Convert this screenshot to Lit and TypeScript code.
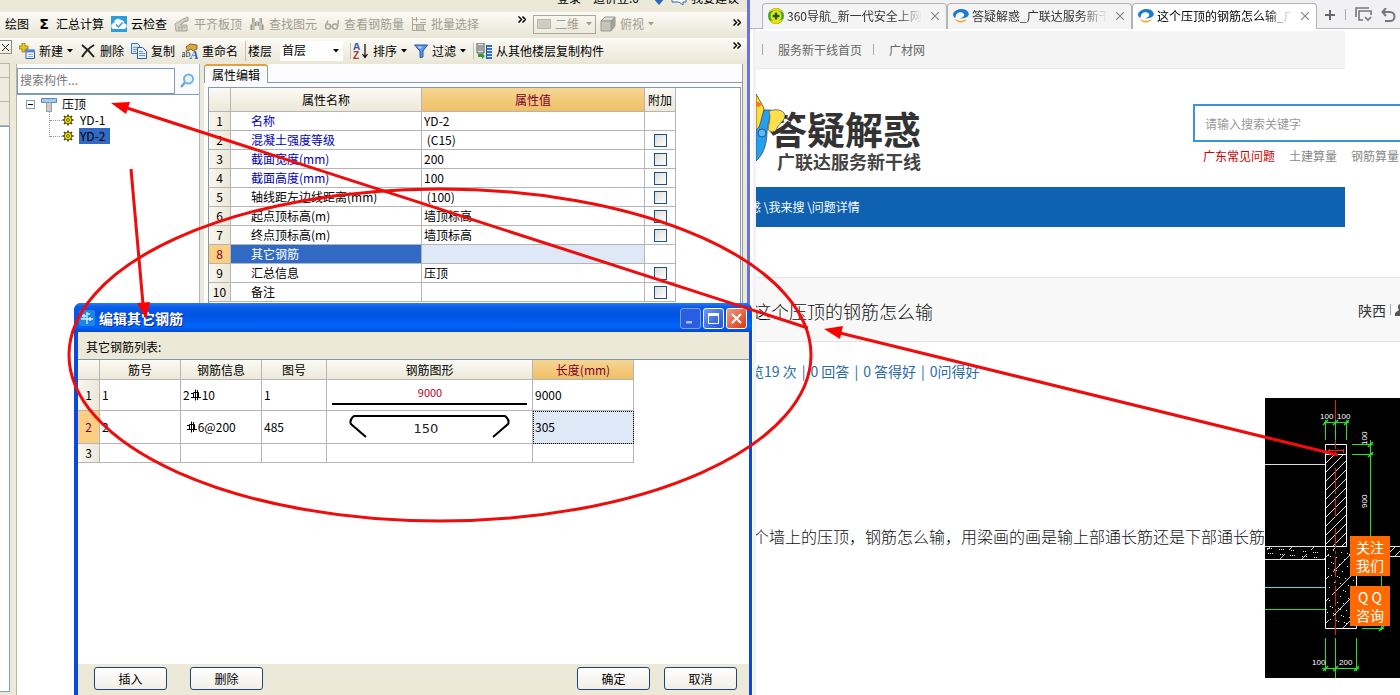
import { LitElement, html, css, svg, nothing } from "lit";
import { customElement } from "lit/decorators.js";
import { classMap } from "lit/directives/class-map.js";

const controls = css`
  * { box-sizing: border-box; }
  button { font: inherit; color: inherit; background: none; border: 0; padding: 0; margin: 0; white-space: nowrap; }
  input, select { font: inherit; color: inherit; margin: 0; border-radius: 0; }
  a { color: inherit; text-decoration: none; }
  svg { display: block; flex: none; }
`;

/* ---------- icons ---------- */
const i16 = (body: unknown) => html`<svg width="16" height="16" viewBox="0 0 16 16" aria-hidden="true">${body}</svg>`;
const caret = html`<svg width="6" height="4" viewBox="0 0 6 4" aria-hidden="true"><path d="M0 0h6L3 3.5z" fill="currentColor"/></svg>`;
const chevrons = html`<svg width="8" height="7" viewBox="0 0 8 7" fill="none" stroke="#000" stroke-width="1.5" aria-hidden="true"><path d="M.5.5l3 3-3 3M4.5.5l3 3-3 3"/></svg>`;

const icons = {
  cloud: i16(svg`<rect width="16" height="16" fill="#2b9fdb"/><path d="M3.500 13a3 3 0 0 1-.4-6A4 4 0 0 1 10 4a3.600 3.600 0 0 1 3.200 3.400 2.800 2.800 0 0 1-.7 5.600z" fill="#fff"/><path d="M5 8.500l2.500 2.500 4-4.500" fill="none" stroke="#2b9fdb" stroke-width="1.500"/>`),
  slab: i16(svg`<path d="M1 8l8-5 5-2v4l-4 1-3 3h6v6H2z" fill="#d4d1c6" stroke="#aaa79c"/><path d="M4 11h8M6 9l6-5M5 15v-4M8 15v-4" stroke="#aaa79c"/>`),
  find: i16(svg`<path d="M3 2h3v4h1V5h2v1h1V2h3v5l2 2v5h-5v-4H6v4H1V9l2-2z" fill="#c2bfb4"/><path d="M3.500 2v5M12.500 2v5M2.500 9v5M13.500 9v5M6.500 6v4M9.500 6v4" stroke="#99968c"/>`),
  glasses: i16(svg`<g fill="none" stroke="#aaa79c" stroke-width="1.500"><circle cx="4" cy="10.500" r="2.500"/><circle cx="11" cy="10.500" r="2.500"/><path d="M2 8.500l2-4M13.500 11l1-7M6.500 10.500h2"/></g>`),
  batch: i16(svg`<path d="M1.500 1v14M1 3.500h6M1 8.500h14M1 14.500h14M5.500 1v5M9 3.500h6M9 6.500h6M5.500 8v6M12.500 8v6" stroke="#aaa79c" fill="none"/><path d="M6 9h6v5H6z" fill="#ccc9be"/>`),
  cube: i16(svg`<path d="M1 5l4-4h10l-4 4z" fill="#e0ddd3" stroke="#9d9a90"/><path d="M11 5l4-4v9l-4 5z" fill="#a5a298" stroke="#9d9a90"/><path d="M1 5h10v10H1z" fill="#c6c3b9" stroke="#9d9a90"/>`),
  fresh: i16(svg`<path d="M3 0h3v3h3v3H6v3H3V6H0V3h3z" fill="#e8c616" stroke="#8a7a20" stroke-width=".8"/><path d="M7 7h8.500v8.500H7z" fill="#fff" stroke="#2a5bb5"/><path d="M7 7h9v2.500H7z" fill="#4a86dd"/><path d="M9 11.500h5M9 13.500h5" stroke="#8ab0e8"/>`),
  remove: i16(svg`<path d="M2 2c4 3 8 7 12 12M14 2C9 5 5 9 2 14" stroke="#222" stroke-width="2" fill="none"/>`),
  copy: i16(svg`<path d="M.5.5h6l2 2v8h-8z" fill="#dbe8fb" stroke="#4272b8"/><path d="M2 4.500h4M2 6.500h4M2 8.500h3" stroke="#7a9fd6"/><path d="M6.500 4.500h5l4 4v7h-9z" fill="#e8f0fd" stroke="#2c5aa8"/><path d="M8 8.500h4M8 10.500h6M8 12.500h6" stroke="#6a92d0"/>`),
  rename: i16(svg`<path d="M4 4l4-3 7 1v4l-4 2-2-2-3 2z" fill="#d9a93c" stroke="#84672a"/><text x="-1" y="14" font-family="Liberation Serif" font-size="10" fill="#333">ab</text><text x="8" y="16" font-family="Liberation Serif" font-size="13" font-weight="bold" font-style="italic" fill="#245fc0">A</text>`),
  sort: i16(svg`<text x="0" y="7" font-family="Liberation Sans" font-size="10" font-weight="bold" fill="#38599e">A</text><text x="0" y="16" font-family="Liberation Sans" font-size="10" font-weight="bold" fill="#a83a36">Z</text><path d="M12 1v13M9.500 11l2.500 3.500 2.500-3.500" fill="none" stroke="#000" stroke-width="1.200"/>`),
  funnel: html`<svg width="14" height="14" viewBox="0 0 14 14" aria-hidden="true"><path d="M.5 1h13L9 7v6l-3 .5V7z" fill="#5b93e6" stroke="#2756a8"/><path d="M3 2.500h5L6.500 5z" fill="#c6ddff"/></svg>`,
  transfer: i16(svg`<path d="M1 0h7v10H1z" fill="#ddd" stroke="#555"/><path d="M2 3h5M2 5h5M2 7h5" stroke="#666"/><path d="M2 11v3h4v2l3-3-3-3v1z" fill="#2c9b3c"/><path d="M10 3h6M10 6h6M10 9h6M10 12h6M10 15h6" stroke="#2a6fd4" stroke-width="2"/><path d="M10.500 2v14" stroke="#1f57b0"/>`),
  lens: i16(svg`<circle cx="9.500" cy="6" r="4.500" fill="#e5f4fd" stroke="#77b5de" stroke-width="2"/><path d="M6 9.500L2 14" stroke="#6da6d2" stroke-width="2.500"/>`),
  beam: i16(svg`<path d="M.5 2.500h15v4H.5z" fill="#a8cdec" stroke="#5b89b0"/><path d="M5.500 6.500h5v9h-5z" fill="#cbcbcb" stroke="#9a9a9a"/>`),
  gear: html`<svg width="12" height="12" viewBox="0 0 12 12" aria-hidden="true"><path d="M6 .5v11M.5 6h11M2 2l8 8M10 2l-8 8" stroke="#3c3a00" stroke-width="1.600"/><circle cx="6" cy="6" r="3.800" fill="#f0e400" stroke="#3c3a00" stroke-width=".8"/><circle cx="6" cy="6" r="1.400" fill="#fff8a0" stroke="#3c3a00" stroke-width=".8"/></svg>`,
  nav360: i16(svg`<circle cx="8" cy="8" r="8" fill="#3aa62a"/><path d="M1 4a8 8 0 0 1 14 1c-4-3-9-3-14-1zM1 12c5 2 10 1 14-1a8 8 0 0 1-14 1z" fill="#f5d90a"/><circle cx="8" cy="8" r="5.500" fill="#f0e51c"/><path d="M8 4.500v7M4.500 8h7" stroke="#14600f" stroke-width="2.400"/>`),
  site: i16(svg`<path d="M0 6C2 1 9 0 13 2c3 2 4 5 1 7-2 1.500-5 1.500-7 1.500C10 9.500 12 8 11 6 9.500 3.500 6 4 4 5.500 2.500 7 3 8.500 2 10 .5 9 0 7.500 0 6z" fill="#1c7bd0"/><path d="M2 10.500c3 3 8 3 12 .5-2 4-10 5.500-12-.5z" fill="#f3a21b"/>`),
};

/* ---------- property window ---------- */
interface Prop { name: string; value: string; key?: boolean; tick?: boolean; current?: boolean }
const props: Prop[] = [
  { name: "名称", value: "YD-2", key: true },
  { name: "混凝土强度等级", value: " (C15)", key: true, tick: true },
  { name: "截面宽度(mm)", value: "200", key: true, tick: true },
  { name: "截面高度(mm)", value: "100", key: true, tick: true },
  { name: "轴线距左边线距离(mm)", value: " (100)", tick: true },
  { name: "起点顶标高(m)", value: "墙顶标高", tick: true },
  { name: "终点顶标高(m)", value: "墙顶标高", tick: true },
  { name: "其它钢筋", value: "", current: true },
  { name: "汇总信息", value: "压顶", tick: true },
  { name: "备注", value: "", tick: true },
];

@customElement("modeler-window")
export class ModelerWindow extends LitElement {
  static styles = [controls, css`
    :host { display: flex; flex-direction: column; min-width: 0; overflow: hidden; background: #ece9d8; border-right: 3px solid #6b74d6; color: #000; }
    .status { display: flex; align-items: flex-end; justify-content: flex-end; gap: 4px; height: 6px; overflow: hidden; padding-right: 8px; line-height: 16px; flex: none; }
    .status span { margin-right: 8px; }
    .status .last { margin-right: 0; }
    .bar { display: flex; align-items: center; gap: 7px; height: 26px; flex: none; background: linear-gradient(#fbfaf5, #e9e6d6); padding-right: 6px; }
    .bar.first { margin-top: 6px; padding-left: 5px; padding-bottom: 2px; }
    .shut { width: 12px; height: 14px; border: 1px solid #8f8c80; border-left: 0; display: grid; place-items: center; margin-bottom: 8px; flex: none; }
    .item { display: flex; align-items: center; gap: 4px; line-height: 16px; flex: none; }
    .off { color: #a09d92; }
    .ruled { border-left: 1px solid #c5c2b2; padding-left: 2px; }
    .sigma { width: 16px; text-align: center; font: bold 14px/16px "DejaVu Sans", sans-serif; }
    .more { margin-left: auto; align-self: flex-start; padding-top: 4px; }
    .view { width: 208px; display: flex; align-items: center; gap: 4px; flex: none; }
    .mode { display: flex; align-items: center; gap: 4px; width: 63px; height: 19px; border: 1px solid #aaa79c; padding: 0 3px; }
    .swatch { width: 14px; height: 10px; background: #cfccc1; border: 1px solid #bab7ac; }
    .mode svg { margin-left: auto; }
    .floor { gap: 8px; }
    .pick { display: grid; align-items: center; width: 63px; height: 20px; background: #fff; }
    .pick select, .pick svg { grid-area: 1 / 1; }
    .pick select { appearance: none; border: 0; background: none; height: 20px; padding: 0 0 2px 2px; width: 63px; }
    .pick svg { justify-self: end; margin-right: 4px; pointer-events: none; }
    .work { display: flex; flex: 1; min-height: 0; }
    .edge { width: 17px; flex: none; display: flex; flex-direction: column; padding-right: 6px; border-right: 1px solid #b8b5a6; }
    .edge .cell { height: 25px; border: 1px solid #bab7a8; border-left: 0; background: #efecdf; margin-top: -1px; flex: none; }
    .edge .cell:first-child { height: 15px; }
    .edge .list { flex: 1; background: #fff; border: 1px solid #7f9db9; border-left: 0; margin-bottom: 3px; }
    .side { width: 183px; flex: none; display: flex; flex-direction: column; background: #fff; border-right: 1px solid #a9b8c8; }
    .search { display: flex; align-items: center; height: 31px; padding-top: 3px; border-bottom: 1px solid #7f9db9; gap: 4px; background: #f8fafc; flex: none; }
    .search input { flex: 1; min-width: 0; height: 26px; border: 1px solid #7f9db9; padding: 0 2px 3px; background: #fff; outline: 0; }
    .search input::placeholder { color: #777; opacity: 1; }
    .search button { margin-right: 4px; }
    .tree, .tree ul { list-style: none; margin: 0; padding: 0; }
    .tree { padding: 1px 0 0 9px; }
    .node { display: flex; align-items: center; height: 16px; line-height: 16px; gap: 5px; }
    .minus { width: 9px; height: 9px; border: 1px solid #7f9db9; display: grid; place-items: center; margin-right: 1px; }
    .minus::before { content: ""; width: 5px; height: 1px; background: #000; }
    .tree ul { margin-left: 23px; border-left: 1px dotted #999; height: 25px; }
    .tree ul .node { gap: 0; }
    .tree ul .node::before { content: ""; width: 12px; border-top: 1px dotted #999; }
    .tree .tag { padding: 0 5px 0 1px; margin-left: 5px; }
    .tree .chosen { background: #316ac5; }
    .panel { flex: 1; min-width: 0; display: flex; flex-direction: column; background: #fcfcfe; margin-left: 4px; border-right: 1px solid #8f9aa8; }
    .tabs { display: flex; height: 19px; flex: none; }
    .tab { width: 64px; line-height: 16px; border: 1px solid #919b9c; border-top: 2px solid #e8a03c; border-bottom: 0; border-radius: 3px 3px 0 0; text-align: center; }
    .tabs::after { content: ""; flex: 1; border-bottom: 1px solid #8299ab; }
    .frame { flex: 1; margin: 4px 1px 0 4px; border: 1px solid #8299ab; border-bottom: 0; background: #fff; min-height: 0; overflow: hidden; }
    table { table-layout: fixed; width: 467px; border-collapse: separate; border-spacing: 0; }
    .c0 { width: 22px; } .c1 { width: 191px; } .c3 { width: 31px; }
    th, td { border: 0 solid #b5b5b5; border-width: 0 1px 1px 0; font-weight: normal; padding: 0; height: 19px; line-height: 18px; white-space: pre; }
    thead th { height: 24px; background: linear-gradient(#fbfaf4, #ece9d9); }
    thead .hot { background: linear-gradient(#f6d594, #f0c066); color: #7a0030; }
    tbody th { background: linear-gradient(90deg, #f8f6ee, #ece9da); }
    .name { padding-left: 20px; }
    .key { color: #0000b8; }
    .value { padding-left: 2px; }
    .current th { background: #fbce84; color: #7a0030; }
    .current .name { background: #316ac5; color: #fff; }
    .current .value { background: #dfe8f6; }
    .tick { text-align: center; }
    .tick input { appearance: none; display: block; width: 13px; height: 13px; margin: 0 auto; border: 1px solid #1c5180; background: linear-gradient(135deg, #dcdcd7, #fff); }
    .rim { width: 4px; flex: none; background: #ece9d8; }
  `];

  render() {
    return html`
      <div class="status">
        <span>登录</span><span>造价豆:0</span>
        ${i16(svg`<path d="M2 8h12l-6 7z" fill="#2a66c4"/>`)}
        ${i16(svg`<path d="M1 1h14v11h-3v3l-4-3H1z" fill="#fff" stroke="#2a66c4"/>`)}
        <span class="last">我要建议</span>
      </div>
      <div class="bar first" role="toolbar" aria-label="绘图">
        <button class="item">绘图</button>
        <button class="item"><span class="sigma">Σ</span>汇总计算</button>
        <button class="item">${icons.cloud}云检查</button>
        <button class="item off">${icons.slab}平齐板顶</button>
        <button class="item off">${icons.find}查找图元</button>
        <button class="item off">${icons.glasses}查看钢筋量</button>
        <button class="item off">${icons.batch}批量选择</button>
        <button class="more" aria-label="更多">${chevrons}</button>
        <div class="view off">
          <button class="mode"><span class="swatch"></span>二维${caret}</button>
          <button class="item">${icons.cube}俯视 ${caret}</button>
          <button class="more" aria-label="更多">${chevrons}</button>
        </div>
      </div>
      <div class="bar" role="toolbar" aria-label="构件">
        <button class="shut" aria-label="关闭"><svg width="7" height="7" viewBox="0 0 7 7" stroke="#222"><path d="M0 0l7 7M7 0L0 7"/></svg></button>
        <button class="item">${icons.fresh}新建${caret}</button>
        <button class="item">${icons.remove}删除</button>
        <button class="item">${icons.copy}复制</button>
        <button class="item">${icons.rename}重命名</button>
        <label class="item ruled floor">楼层
          <span class="pick"><select><option>首层</option></select>${caret}</span>
        </label>
        <button class="item ruled">${icons.sort}排序${caret}</button>
        <button class="item">${icons.funnel}过滤${caret}</button>
        <button class="item ruled">${icons.transfer}从其他楼层复制构件</button>
        <button class="more" aria-label="更多">${chevrons}</button>
      </div>
      <div class="work">
        <div class="edge"><div class="cell"></div><div class="cell"></div><div class="cell"></div><div class="list"></div></div>
        <div class="side">
          <div class="search">
            <input type="text" placeholder="搜索构件..." aria-label="搜索构件" />
            <button aria-label="搜索">${icons.lens}</button>
          </div>
          <ul class="tree">
            <li>
              <div class="node"><span class="minus"></span>${icons.beam}压顶</div>
              <ul>
                <li class="node">${icons.gear}<span class="tag">YD-1</span></li>
                <li class="node">${icons.gear}<span class="tag chosen">YD-2</span></li>
              </ul>
            </li>
          </ul>
        </div>
        <div class="panel">
          <div class="tabs"><button class="tab">属性编辑</button></div>
          <div class="frame">
            <table>
              <colgroup><col class="c0" /><col class="c1" /><col /><col class="c3" /></colgroup>
              <thead><tr><th></th><th>属性名称</th><th class="hot">属性值</th><th>附加</th></tr></thead>
              <tbody>
                ${props.map((p, i) => html`
                  <tr class=${classMap({ current: !!p.current })}>
                    <th>${i + 1}</th>
                    <td class=${classMap({ name: true, key: !!p.key })}>${p.name}</td>
                    <td class="value">${p.value}</td>
                    <td class="tick">${p.tick ? html`<input type="checkbox" aria-label=${"附加 " + p.name} />` : nothing}</td>
                  </tr>`)}
              </tbody>
            </table>
          </div>
        </div>
        <div class="rim"></div>
      </div>
    `;
  }
}

/* ---------- dialog ---------- */
const rebar = html`<svg width="10" height="12" viewBox="0 0 10 12" fill="none" stroke="#000" role="img" aria-label="钢筋"><path d="M2.500 3.500h5v5M2.500 3.500v5M4.500 .5v11M6.500 1v10M0 8.500h10M0 4.500h3"/></svg>`;

@customElement("rebar-dialog")
export class RebarDialog extends LitElement {
  static styles = [controls, css`
    :host { display: flex; flex-direction: column; background: #0a49dc; border-radius: 7px 7px 0 0; padding: 0 3px 0 4px; color: #000; }
    .title { display: flex; align-items: center; gap: 2px; height: 29px; flex: none; margin: 0 -3px 0 -4px; padding: 1px 5px 0 5px; border-radius: 7px 7px 0 0; background: linear-gradient(#2a7bf5 0, #0a5cea 4px, #0054e3 12px, #0064fb 24px, #0048d0 100%); color: #fff; font-weight: bold; font-size: 14px; }
    h2 { font-size: 14px; line-height: 20px; margin: 0; padding-left: 2px; flex: 1; text-shadow: 1px 1px #0a2d86; }
    .ctl { width: 21px; height: 21px; border: 1px solid #fff; border-radius: 3px; display: grid; place-items: center; background: linear-gradient(135deg, #6f97f2, #2153d8); }
    .min { background: #2a5ee2; border-color: #7a9df0; }
    .close { background: linear-gradient(135deg, #f09a80, #d63a12); }
    .caption { background: #ece9d8; line-height: 16px; padding: 7px 8px 4px; }
    .area { flex: 1; background: #fff; border-top: 1px solid #8299ab; min-height: 0; }
    table { table-layout: fixed; width: 556px; border-collapse: separate; border-spacing: 0; }
    .c0 { width: 22px; } .c1 { width: 81px; } .c3 { width: 65px; } .c4 { width: 206px; }
    th, td { border: 0 solid #b5b5b5; border-width: 0 1px 1px 0; font-weight: normal; padding: 0; line-height: 18px; }
    td { padding-left: 2px; }
    thead th { height: 20px; background: linear-gradient(#fbfaf4, #ece9d9); }
    thead .hot { background: linear-gradient(#f6d594, #f0c066); color: #7a0030; }
    tbody th { background: linear-gradient(90deg, #f8f6ee, #ece9da); }
    .r1 { height: 31px; } .r2 { height: 33px; } .r3 { height: 19px; }
    .r2 th { background: #fbce84; color: #7a0030; }
    .info { display: flex; align-items: center; gap: 1px; }
    .shape { padding: 0; }
    .focus { background: #dfe8f6; outline: 1px dotted #000; outline-offset: -1px; }
    .foot { display: flex; gap: 23px; height: 31px; flex: none; padding: 3px 12px 0 16px; background: #ece9d8; }
    .foot button { width: 73px; height: 23px; border: 1px solid #1c4675; border-radius: 3px; background: linear-gradient(#fff, #f1efe6); line-height: 18px; }
    .pair { display: flex; gap: 14px; margin-left: auto; }
  `];

  render() {
    return html`
      <div class="title">
        <svg width="16" height="16" viewBox="0 0 16 16" aria-hidden="true"><rect width="16" height="16" rx="2" fill="#1b86e8"/><path d="M8 2v12M3 6h4M2 9h12M5 4v4M11 7v4M8 4h3" stroke="#d9f1ff" stroke-width="1.300"/></svg>
        <h2>编辑其它钢筋</h2>
        <button class="ctl min" aria-label="最小化"><svg width="13" height="13" viewBox="0 0 13 13"><path d="M2 9h6v2.500H2z" fill="#a9c0f5"/></svg></button>
        <button class="ctl" aria-label="最大化"><svg width="13" height="13" viewBox="0 0 13 13" fill="none" stroke="#fff"><path d="M1.500 2h10v9.500h-10z"/><path d="M1 2.500h11" stroke-width="3"/></svg></button>
        <button class="ctl close" aria-label="关闭"><svg width="13" height="13" viewBox="0 0 13 13" stroke="#fff" stroke-width="2"><path d="M2 2l9 9M11 2l-9 9"/></svg></button>
      </div>
      <div class="caption">其它钢筋列表:</div>
      <div class="area">
        <table>
          <colgroup><col class="c0" /><col class="c1" /><col class="c1" /><col class="c3" /><col class="c4" /><col /></colgroup>
          <thead><tr><th></th><th>筋号</th><th>钢筋信息</th><th>图号</th><th>钢筋图形</th><th class="hot">长度(mm)</th></tr></thead>
          <tbody>
            <tr class="r1"><th>1</th><td>1</td><td><span class="info">2 ${rebar} 10</span></td><td>1</td>
              <td class="shape"><svg width="205" height="30" viewBox="0 0 205 30"><text x="103" y="17" text-anchor="middle" font-size="11" fill="#c00018">9000</text><path d="M5 24h195" stroke="#000" stroke-width="2"/></svg></td>
              <td>9000</td></tr>
            <tr class="r2"><th>2</th><td>2</td><td><span class="info">&nbsp;${rebar} 6@200</span></td><td>485</td>
              <td class="shape"><svg width="205" height="32" viewBox="0 0 205 32"><path d="M39 26L24 13q-2-4 3-8h151q5 4 3 8L166 26" fill="none" stroke="#000" stroke-width="2"/><text x="99" y="22" text-anchor="middle" font-size="13" font-family="DejaVu Sans" fill="#222">150</text></svg></td>
              <td class="focus">305</td></tr>
            <tr class="r3"><th>3</th><td></td><td></td><td></td><td></td><td></td></tr>
          </tbody>
        </table>
      </div>
      <div class="foot">
        <button>插入</button><button>删除</button>
        <div class="pair"><button>确定</button><button>取消</button></div>
      </div>
    `;
  }
}

/* ---------- section drawing ---------- */
const specks = Array.from({ length: 64 }, (_, i) => {
  const x = 62 + ((i * 37) % 27);
  const y = 151 + ((i * 53) % 76);
  return svg`<rect x=${x} y=${y} width="1" height="1"/>`;
});
const slabSpecks = Array.from({ length: 26 }, (_, i) => svg`<rect x=${2 + ((i * 23) % 57)} y=${150 + ((i * 7) % 10)} width="1" height="1"/>`);

const section = html`
  <svg width="135" height="280" viewBox="0 0 135 280" role="img" aria-label="压顶剖面">
    <defs>
      <pattern id="brick" width="9" height="9" patternUnits="userSpaceOnUse"><path d="M-1 10L10-1M-1 1L1-1M8 10L10 8" stroke="#ddd"/></pattern>
      <pattern id="rc" width="22" height="22" patternUnits="userSpaceOnUse"><path d="M2 20L20 2" stroke="#ccc"/></pattern>
    </defs>
    <rect width="135" height="280" fill="#000"/>
    <path d="M0 66.500h60M0 148.500h60M0 161.500h60M124 148.500h11M124 158.500h11" stroke="#ddd"/>
    <path d="M0 189.500h60" stroke="#40e0e0"/>
    <path d="M0 211.500h62" stroke="#20e020"/>
    <rect x="0" y="149" width="60" height="12" fill="url(#rc)"/>
    <rect x="124" y="149" width="11" height="9" fill="url(#brick)"/>
    <rect x="61" y="57" width="20" height="91" fill="url(#brick)"/>
    <rect x="61" y="149" width="30" height="81" fill="url(#rc)"/>
    <g fill="#eee">${specks}${slabSpecks}</g>
    <path d="M60.500 46.500h21v102h-21zM60.500 56.500h21M60.500 148.500v82h31v-82" fill="none" stroke="#fff"/>
    <path d="M70.500 2v55M70.500 70v50M70.500 130v112" stroke="#f01818" stroke-dasharray="20 3 3 3" fill="none"/>
    <path d="M63 52.500h16M64.500 55v-4M78.500 55v-4" stroke="#f02020" fill="none"/>
    <g fill="none" stroke="#28e028">
      <path d="M59 24.500h25M60.500 22v20M70.500 22v20M81.500 22v20M87 46.500h21M87 56.500h21M105.500 42v96M97 230.500h22M116.500 160v72M60.500 240v33M70.500 240v40M91.500 240v33M57 270.500h37"/>
      <path d="M58 27l5-5M68 27l5-5M79 27l5-5M103 49l5-5M103 59l5-5M114 233l5-5M58 273l5-5M68 273l5-5M89 273l5-5" stroke-width="1.500"/>
    </g>
    <g fill="#fff" font-family="Liberation Sans Narrow, Liberation Sans" font-size="8">
      <text x="55" y="21">100</text><text x="72" y="21">100</text>
      <text x="47" y="267">100</text><text x="74" y="267">200</text>
      <text transform="translate(102 47) rotate(-90)">100</text>
      <text transform="translate(102 110) rotate(-90)">900</text>
    </g>
  </svg>`;

/* ---------- browser ---------- */
@customElement("browser-window")
export class BrowserWindow extends LitElement {
  static styles = [controls, css`
    :host { display: flex; flex-direction: column; min-width: 0; overflow: hidden; background: #fff; color: #333; }
    .tabs { display: flex; height: 29px; flex: none; padding: 3px 0 0 12px; background: #f1f1f4; border-bottom: 1px solid #b8b8b8; }
    .tab { display: flex; align-items: center; gap: 3px; width: 185px; flex: none; height: 26px; padding: 0 7px 2px 5px; border: 1px solid #b4b4b4; border-bottom: 0; border-radius: 4px 4px 0 0; background: #f4f4f4; }
    .tab.on { background: #fff; }
    .tab.on .text { color: #000; }
    .text { flex: 1; min-width: 0; overflow: hidden; white-space: nowrap; line-height: 18px; color: #333; -webkit-mask-image: linear-gradient(90deg, #000 80%, transparent); }
    .tab svg + .text { margin-right: 6px; }
    .tools { display: flex; align-items: center; gap: 9px; padding: 0 0 2px 7px; flex: none; }
    .page { flex: 1; margin-left: 3px; border-left: 3px solid #f1f1f6; overflow: hidden; min-height: 0; }
    .links { display: flex; align-items: center; gap: 15px; height: 40px; border-bottom: 1px solid #e8e8e8; padding-left: 6px; color: #666; margin-right: 55px; background: #f4f4f4; line-height: 18px; border-top: 2px solid #fff; }
    .rule { width: 1px; height: 11px; background: #aaa; }
    .rule + a + .rule { margin-left: -4px; }
    .head { display: flex; justify-content: space-between; height: 118px; }
    .brand { display: flex; padding-top: 25px; }
    .brand svg { position: relative; z-index: 1; }
    .brand div { display: flex; flex-direction: column; margin-left: -18px; font-weight: bold; align-items: flex-end; }
    .name { font-size: 38px; line-height: 40px; color: #333; margin-top: 14px; }
    .sub { font-size: 18px; line-height: 20px; color: #444; margin-top: 3px; }
    .find { width: 207px; padding-top: 35px; }
    .find input { display: block; width: 100%; height: 38px; border: 2px solid #3a94dc; border-right: 0; padding: 0 10px; outline: 0; background: #fff; }
    .find input::placeholder { color: #999; opacity: 1; }
    .hot { display: flex; gap: 14px; padding: 5px 0 0 10px; line-height: 18px; color: #888; white-space: nowrap; }
    .hot .first { color: #c00; }
    .crumbs { height: 40px; line-height: 40px; margin: 0 55px 0 0; background: #0f62b2; color: #fff; text-indent: -7px; }
    .ask { display: flex; align-items: center; justify-content: space-between; height: 65px; margin-top: 50px; background: #f8f8f8; border: 1px solid #e4e4e4; border-width: 1px 0; text-indent: -3px; }
    h1 { font-size: 18px; line-height: 26px; font-weight: 300; margin: 0; padding-top: 3px; color: #111; }
    .who { display: flex; align-items: center; gap: 4px; font-size: 14px; line-height: 20px; height: 20px; text-indent: 0; }
    .stats { display: flex; gap: 5px; font-size: 14px; line-height: 20px; color: #2a6ba8; padding-top: 19px; white-space: nowrap; }
    .stats a:first-child { margin-left: -6px; }
    .post { display: flex; padding-top: 17px; }
    .said { flex: 1; min-width: 0; display: flex; justify-content: flex-end; overflow: hidden; white-space: nowrap; font-size: 16px; line-height: 24px; font-weight: 300; color: #111; margin: 0; padding-top: 126px; }
  `];

  private tab(icon: unknown, text: string, on = false) {
    return html`<div class=${classMap({ tab: true, on })}>${icon}<span class="text">${text}</span>
      <button aria-label="关闭标签"><svg width="8" height="8" viewBox="0 0 8 8" stroke="#888" stroke-width="1.200"><path d="M0 0l8 8M8 0L0 8"/></svg></button></div>`;
  }

  render() {
    return html`
      <div class="tabs">
        ${this.tab(icons.nav360, "360导航_新一代安全上网·")}
        ${this.tab(icons.site, "答疑解惑_广联达服务新干线")}
        ${this.tab(icons.site, "这个压顶的钢筋怎么输_广联达", true)}
        <div class="tools">
          <button aria-label="新标签"><svg width="12" height="12" viewBox="0 0 12 12" stroke="#666" stroke-width="2"><path d="M6 1v10M1 6h10"/></svg></button>
          <span class="rule"></span>
          <button aria-label="窗口"><svg width="17" height="15" viewBox="0 0 17 15" fill="none" stroke="#777" stroke-width="1.600"><path d="M1 10V1h13M8 13H4V4h12v4M10 10l3 3 3-3"/></svg></button>
          <button aria-label="恢复"><svg width="15" height="14" viewBox="0 0 15 14" fill="none" stroke="#777" stroke-width="2"><path d="M5 0L1.500 4 5 8M2 4h7a4.500 4.500 0 0 1 0 9H4"/></svg></button>
        </div>
      </div>
      <div class="page">
        <nav class="links"><span class="rule"></span><a href="#">服务新干线首页</a><span class="rule"></span><a href="#">广材网</a></nav>
        <header class="head">
          <div class="brand">
            <svg width="31" height="75" viewBox="0 0 31 75" aria-hidden="true">
              <path d="M0 0l8 14-1 20-7 8z" fill="#ffdc3a" stroke="#5a4a20" stroke-width=".8"/>
              <path d="M0 7l6 3-3 3-3-1z" fill="#f07a20"/>
              <path d="M8 16h7c-1 9-4 16-4 22 0 14-5 24-11 29V36c5-3 5-12 8-20z" fill="#25a0ee" stroke="#3a4a60" stroke-width=".8"/>
              <path d="M13 17c6-2 14-2 16 4 0 6-5 7-8 13-1 5-8 5-9 1 1-6 3-10 1-18z" fill="#ffe04a" stroke="#4a5a60" stroke-width=".8"/>
              <circle cx="6" cy="39" r="4" fill="#59baf4" stroke="#22588c"/>
            </svg>
            <div><span class="name">答疑解惑</span><span class="sub">广联达服务新干线</span></div>
          </div>
          <div class="find">
            <input type="text" placeholder="请输入搜索关键字" aria-label="请输入搜索关键字" />
            <div class="hot"><a class="first" href="#">广东常见问题</a><a href="#">土建算量</a><a href="#">钢筋算量</a></div>
          </div>
        </header>
        <div class="crumbs"><a href="#">惑</a> <a href="#">\\我来搜</a> <a href="#">\\问题详情</a></div>
        <div class="ask">
          <h1>这个压顶的钢筋怎么输</h1>
          <div class="who">陕西 <span class="rule"></span>
            <svg width="5" height="14" viewBox="0 0 5 14" fill="#555" aria-hidden="true"><path d="M5 1a3 3 0 0 0-2 3 4 4 0 0 0 1 3L0 10v3h5z"/></svg>
          </div>
        </div>
        <div class="stats"><a>览19 次</a><span>|</span><a>0 回答</a><span>|</span><a>0 答得好</a><span>|</span><a>0问得好</a></div>
        <div class="post">
          <p class="said">个墙上的压顶，钢筋怎么输，用梁画的画是输上部通长筋还是下部通长筋</p>
          ${section}
        </div>
      </div>
    `;
  }
}

/* ---------- whole screen ---------- */
@customElement("app-root")
export class AppRoot extends LitElement {
  static styles = [controls, css`
    :host { display: grid; grid-template-columns: minmax(0, 750fr) minmax(0, 650fr); position: relative; height: 100vh; overflow: hidden; font: 12px/16px "Noto Sans CJK SC", "Noto Sans", sans-serif; }
    rebar-dialog { position: absolute; z-index: 2; left: 74px; top: 303px; bottom: 0; width: 678px; }
    .float { position: absolute; right: 10px; top: 536px; display: flex; flex-direction: column; gap: 10px; }
    .float button { width: 40px; height: 40px; background: #ff6a00; color: #fff; font-size: 14px; line-height: 18px; white-space: normal; padding: 0 5px; }
    .marks { position: absolute; z-index: 3; left: 0; top: 0; pointer-events: none; }
  `];

  render() {
    return html`
      <modeler-window></modeler-window>
      <browser-window></browser-window>
      <rebar-dialog></rebar-dialog>
      <div class="float"><button>关注我们</button><button>Q Q 咨询</button></div>
      <svg class="marks" width="1400" height="695" viewBox="0 0 1400 695" aria-hidden="true">
        <g fill="none" stroke="#ee0c0c" stroke-width="3">
          <ellipse cx="440" cy="355" rx="371" ry="166"/>
          <path d="M808 328L127 108M1338 455L840 333M131 169L143 304"/>
        </g>
        <g fill="#f00">
          <path d="M111 103l19-1-4 12zM824 329l19-3-3 13zM146 319l-9-16 13-1z"/>
        </g>
      </svg>
    `;
  }
}
